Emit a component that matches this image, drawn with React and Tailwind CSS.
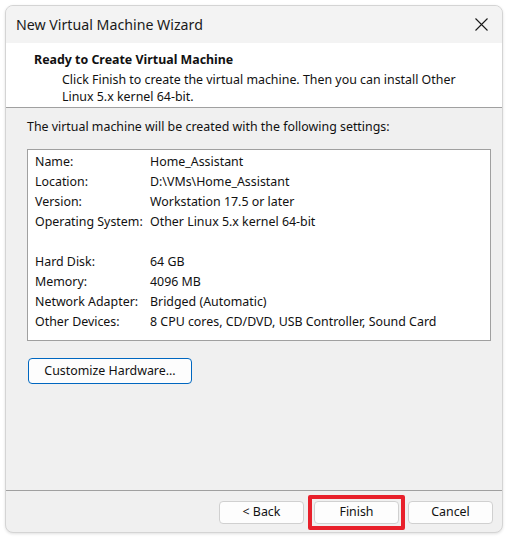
import React from 'react';

const settings = [
  ['Name:', 'Home_Assistant'],
  ['Location:', 'D:\\VMs\\Home_Assistant'],
  ['Version:', 'Workstation 17.5 or later'],
  ['Operating System:', 'Other Linux 5.x kernel 64-bit'],
  null,
  ['Hard Disk:', '64 GB'],
  ['Memory:', '4096 MB'],
  ['Network Adapter:', 'Bridged (Automatic)'],
  ['Other Devices:', '8 CPU cores, CD/DVD, USB Controller, Sound Card'],
];

function CloseIcon() {
  return (
    <svg width="13" height="13" viewBox="0 0 13 13" fill="none" stroke="#1a1a1a" strokeWidth="1.1">
      <path d="M0.5 0.5 L12.5 12.5 M12.5 0.5 L0.5 12.5" />
    </svg>
  );
}

export default function App() {
  return (
    <div
      className="w-[509px] h-[538px] bg-white pt-[5px] pl-[5px] text-[12.4px] text-[#111]"
      style={{ fontFamily: '"Noto Sans", "Liberation Sans", sans-serif' }}
    >
      <div className="w-[498px] h-[528px] rounded-[8px] border border-[#d4d4d4] bg-[#f0f0f0] overflow-hidden flex flex-col shadow-[0_1px_3px_rgba(0,0,0,0.12)]">
        {/* title bar */}
        <div className="h-[37px] bg-[#f3f3f3] flex items-center justify-between pl-[10px] pr-[14px] shrink-0">
          <span className="text-[14.2px] text-[#1a1a1a]">New Virtual Machine Wizard</span>
          <CloseIcon />
        </div>

        {/* header */}
        <div className="h-[65px] bg-white border-b border-[#a0a0a0] shrink-0 pt-[8px] pl-[28px]">
          <div className="font-bold leading-[17px]">Ready to Create Virtual Machine</div>
          <div className="pl-[28px] leading-[17px] mt-[3px]">
            Click Finish to create the virtual machine. Then you can install Other
            <br />
            Linux 5.x kernel 64-bit.
          </div>
        </div>

        {/* body */}
        <div className="flex-1 pl-[21px] pr-[11px] pt-[10px]">
          <div className="leading-[17px]">The virtual machine will be created with the following settings:</div>
          <div className="mt-[14px] h-[192px] w-[464px] border border-[#a0a0a0] bg-white pt-[2px] pl-[7px]">
            {settings.map((row, i) =>
              row ? (
                <div key={i} className="flex h-[20px] items-center">
                  <span className="w-[115px] shrink-0">{row[0]}</span>
                  <span>{row[1]}</span>
                </div>
              ) : (
                <div key={i} className="h-[20px]" />
              )
            )}
          </div>
          <button className="mt-[17px] ml-[1px] h-[26px] w-[164px] rounded-[4px] border border-[#0067c0] bg-[#fdfdfd]">
            Customize Hardware...
          </button>
        </div>

        {/* footer */}
        <div className="h-[42px] border-t border-[#a0a0a0] flex items-center justify-end pr-[9px] pt-[2px] shrink-0">
          <button className="h-[23px] w-[85px] rounded-[4px] border border-[#d0d0d0] bg-[#fdfdfd]">&lt; Back</button>
          <div className="ml-[4px] rounded-[2px] border-[4px] border-[#e8202b] p-[2px]">
            <button className="block h-[23px] w-[85px] rounded-[4px] border border-[#d0d0d0] bg-[#fdfdfd]">Finish</button>
          </div>
          <button className="ml-[3px] h-[23px] w-[85px] rounded-[4px] border border-[#d0d0d0] bg-[#fdfdfd]">Cancel</button>
        </div>
      </div>
    </div>
  );
}
